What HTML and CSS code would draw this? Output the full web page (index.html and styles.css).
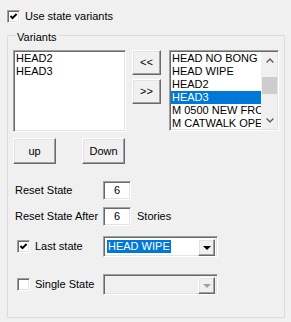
FILE: index.html
```html
<!DOCTYPE html>
<html lang="en">
<head>
  <meta charset="UTF-8">
  <title>State variants</title>
  <link rel="stylesheet" href="styles.css">
</head>
<body>
  <div class="top-row">
    <span class="check checked">
      <svg width="9" height="9" viewBox="0 0 9 9"><path d="M1.5 4 L3.5 6.2 L7.6 2" fill="none" stroke="#000" stroke-width="1.9"/></svg>
    </span>
    <span>Use state variants</span>
  </div>

  <fieldset class="group">
    <legend>Variants</legend>

    <div class="lists">
      <div class="listbox left">
        <div class="items">
          <div class="item">HEAD2</div>
          <div class="item">HEAD3</div>
        </div>
      </div>
      <div class="move-btns">
        <button class="btn move">&lt;&lt;</button>
        <button class="btn move">&gt;&gt;</button>
      </div>
      <div class="listbox right">
        <div class="items">
          <div class="item">HEAD NO BONG</div>
          <div class="item">HEAD WIPE</div>
          <div class="item">HEAD2</div>
          <div class="item selected">HEAD3</div>
          <div class="item">M 0500 NEW FRONT</div>
          <div class="item">M CATWALK OPEN</div>
        </div>
        <div class="scrollbar">
          <div class="sb-arrow">
            <svg width="8" height="5" viewBox="0 0 8 5"><polyline points="0.6,4.4 4,1 7.4,4.4" fill="none" stroke="#606060" stroke-width="1.4"/></svg>
          </div>
          <div class="sb-thumb"></div>
          <div class="sb-track"></div>
          <div class="sb-arrow">
            <svg width="8" height="5" viewBox="0 0 8 5"><polyline points="0.6,0.6 4,4 7.4,0.6" fill="none" stroke="#606060" stroke-width="1.4"/></svg>
          </div>
        </div>
      </div>
    </div>

    <div class="order-btns">
      <button class="btn order">up</button>
      <button class="btn order">Down</button>
    </div>

    <div class="field-row first">
      <span class="field-label">Reset State</span>
      <span class="textbox">6</span>
    </div>
    <div class="field-row">
      <span class="field-label">Reset State After</span>
      <span class="textbox">6</span>
      <span class="after">Stories</span>
    </div>

    <div class="check-row first">
      <span class="check checked">
        <svg width="9" height="9" viewBox="0 0 9 9"><path d="M1.5 4 L3.5 6.2 L7.6 2" fill="none" stroke="#000" stroke-width="1.9"/></svg>
      </span>
      <span class="check-label">Last state</span>
      <div class="combo">
        <div class="combo-text"><span class="highlight">HEAD WIPE</span></div>
        <span class="combo-btn"><span class="arrow"></span></span>
      </div>
    </div>

    <div class="check-row second">
      <span class="check"></span>
      <span class="check-label">Single State</span>
      <div class="combo disabled">
        <div class="combo-text"></div>
        <span class="combo-btn"><span class="arrow"></span></span>
      </div>
    </div>
  </fieldset>
</body>
</html>
```

FILE: styles.css
```css
body {
  margin: 0;
  padding: 10px 6px 0 7px;
  background: #f0f0f0;
  color: #000;
  font-family: "Liberation Sans", Arial, sans-serif;
  font-size: 11px;
  line-height: 13px;
  height: 322px;
  box-sizing: border-box;
  overflow: hidden;
}

/* sunken 3d edge, used by lists, text boxes, combos, checkboxes */
.check,
.listbox,
.textbox,
.combo {
  box-sizing: border-box;
  background: #fff;
  border: 1px solid;
  border-color: #a0a0a0 #fff #fff #a0a0a0;
  box-shadow: inset 1px 1px #696969, inset -1px -1px #e3e3e3;
}

.top-row {
  display: flex;
  align-items: center;
  gap: 5px;
  height: 13px;
}

.check {
  width: 13px;
  height: 13px;
  flex: none;
  display: flex;
  align-items: center;
  justify-content: center;
}
.check svg { display: block; }

.group {
  margin: 4px 0 0;
  padding: 6px 5px 22px;
  border: 1px solid #dcdcdc;
}
.group legend {
  margin-left: 3px;
  padding: 4px 2px 0 1px;
  line-height: 13px;
}

.lists {
  display: flex;
  align-items: flex-start;
}
.listbox.left {
  width: 113px;
  height: 82px;
  margin-right: 6px;
  padding: 1px;
}
.listbox.right {
  width: 110px;
  height: 81px;
  padding: 1px;
  display: flex;
}
.items {
  flex: 1;
  min-width: 0;
  overflow: hidden;
}
.item {
  height: 13px;
  padding-left: 1px;
  white-space: nowrap;
}
.item.selected {
  background: #0078d7;
  color: #fff;
}

.scrollbar {
  width: 16px;
  flex: none;
  background: #f0f0f0;
  display: flex;
  flex-direction: column;
}
.sb-arrow {
  height: 17px;
  display: flex;
  align-items: center;
  justify-content: center;
  padding-left: 1px;
}
.sb-thumb {
  height: 17px;
  margin: 8px 0 0 1px;
  background: #cdcdcd;
}
.sb-track { flex: 1; }

/* raised 3d edge */
.btn,
.combo-btn {
  box-sizing: border-box;
  background: #f0f0f0;
  border: 1px solid;
  border-color: #fff #696969 #696969 #fff;
  box-shadow: inset -1px -1px #a0a0a0, inset 1px 1px #e3e3e3;
  font: inherit;
  color: #000;
  padding: 0;
}

.move-btns {
  display: flex;
  flex-direction: column;
  gap: 4px;
  margin-right: 8px;
}
.btn.move {
  width: 29px;
  height: 25px;
}

.order-btns {
  display: flex;
  gap: 26px;
  margin-top: 6px;
}
.btn.order {
  width: 43px;
  height: 26px;
}

.field-row {
  display: flex;
  align-items: center;
  padding-left: 2px;
  margin-top: 7px;
}
.field-row.first { margin-top: 17px; }
.field-label {
  width: 88px;
  white-space: nowrap;
}
.textbox {
  width: 28px;
  height: 19px;
  display: flex;
  align-items: center;
  justify-content: center;
}
.after { margin-left: 6px; }

.check-row {
  display: flex;
  align-items: center;
  padding-left: 4px;
  height: 21px;
}
.check-row.first { margin-top: 10px; }
.check-row.second { margin-top: 17px; }
.check-label {
  width: 68px;
  margin-left: 5px;
  white-space: nowrap;
}

.combo {
  width: 115px;
  height: 21px;
  padding: 2px;
  display: flex;
}
.combo.disabled { background: #f0f0f0; }
.combo-text {
  flex: 1;
  display: flex;
  align-items: center;
}
.highlight {
  margin-left: 1px;
  padding: 0 1px;
  background: #0078d7;
  color: #fff;
}
.combo-btn {
  width: 17px;
  height: 17px;
  display: flex;
  align-items: center;
  justify-content: center;
}
.arrow {
  width: 0;
  height: 0;
  border-left: 4px solid transparent;
  border-right: 4px solid transparent;
  border-top: 4px solid #000;
  margin-top: 1px;
}
.combo.disabled .arrow { border-top-color: #a0a0a0; }
```
